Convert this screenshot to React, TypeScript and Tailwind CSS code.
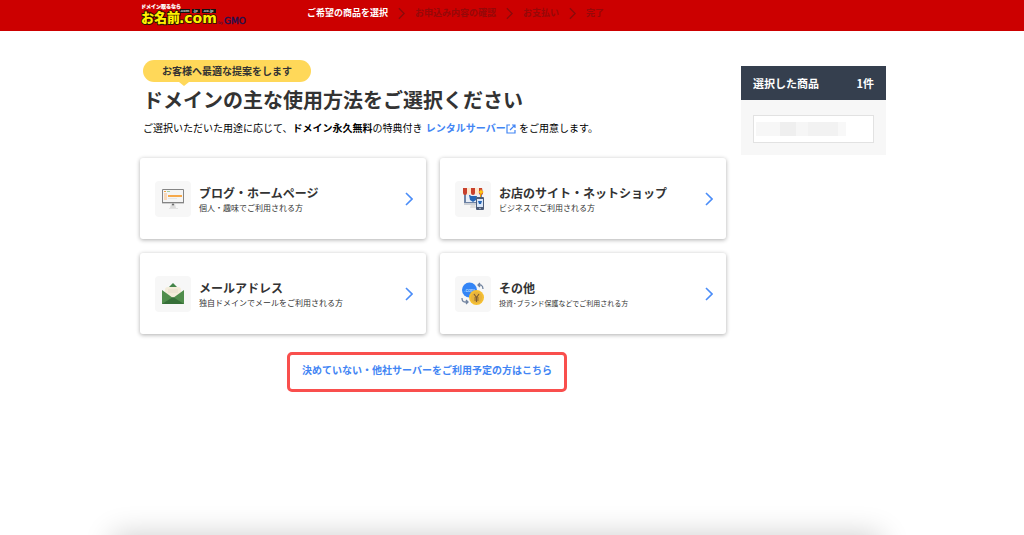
import { Fragment, type ReactNode } from "react";

const steps = ["ご希望の商品を選択", "お申込み内容の確認", "お支払い", "完了"];

function Chevron({ className }: { className: string }) {
  return (
    <svg viewBox="0 0 8 14" className={className} fill="none" stroke="currentColor" aria-hidden="true">
      <path d="M1 1l6 6-6 6" strokeWidth="1.6" />
    </svg>
  );
}

function Logo() {
  return (
    <svg viewBox="0 0 110 28" className="h-7 w-[110px]" role="img" aria-label="お名前.com by GMO">
      <g fontFamily="'Noto Sans CJK JP', sans-serif" fontWeight="900">
        <text x="0" y="8" fontSize="5" fill="#fff" stroke="#fff" strokeWidth="0.2">ドメイン取るなら</text>
        <text x="0" y="22" fontSize="13" fill="#fff100" stroke="#2a1500" strokeWidth="2" paintOrder="stroke">お名前</text>
      </g>
      <g fontFamily="'DejaVu Sans', sans-serif">
        <text x="38" y="23" fontSize="14" fontWeight="700" fill="#fff100" stroke="#2a1500" strokeWidth="1.6" paintOrder="stroke">.com</text>
        <text x="77" y="24" fontSize="4" fill="#24124f">by</text>
        <text x="83" y="24" fontSize="9" fill="#24124f" stroke="#24124f" strokeWidth="0.4">GMO</text>
      </g>
      <path d="M39 9h10v4H39zM51 9h8v4h-8zM61 9h14v4H61z" fill="#111" />
      <g fontFamily="'Liberation Sans', sans-serif" fontWeight="700" fontSize="4" fill="#ddd">
        <text x="39" y="12">.com</text>
        <text x="52" y="12">.jp</text>
        <text x="62" y="12">.co.jp</text>
      </g>
    </svg>
  );
}

const icon = "h-6 w-6";

function MonitorIcon() {
  return (
    <svg viewBox="0 0 24 24" className={icon} aria-hidden="true">
      <path d="M10 17h4l1 4H9z" fill="#dcdcdc" />
      <path d="M8 21h9v1H8z" fill="#e2e2e2" />
      <rect x="1" y="2" width="22" height="15" rx="1" fill="#858585" />
      <rect x="2" y="3" width="20" height="12" fill="#f5f5f5" />
      <path d="M3 4h2v1H3z" fill="#f4a340" />
      <path d="M6 4h3v1H6z" fill="#a9cf9a" />
      <path d="M3 6h3v7H3z" fill="#f8d9bb" />
      <path d="M7 8h14v2H7z" fill="#f6a94b" />
      <path d="M7 11h9v1H7z" fill="#e6e6e6" />
      <path d="M1 16h22v1H1z" fill="#cfcfcf" />
      <circle cx="12" cy="17.5" r="1" fill="#666" />
    </svg>
  );
}

function ShopIcon() {
  return (
    <svg viewBox="0 0 24 24" className={icon} aria-hidden="true">
      <path d="M10 17h4l1 4H9z" fill="#dedede" />
      <rect x="3" y="5" width="18" height="12" fill="#6e83a5" />
      <rect x="5" y="6" width="14" height="9" fill="#e8eef7" />
      <path d="M3 16h18v2H3z" fill="#ccd0d6" />
      <path d="M8 8h1l1 1h6l-1 4-3 2-3-2z" fill="#2465b5" />
      <path d="M2 1h4v5a2 2 0 0 1-4 0zM10 1h4v5a2 2 0 0 1-4 0zM18 1h3l1 5a2 2 0 0 1-4 0z" fill="#c8402c" />
      <path d="M6 1h4v5a2 2 0 0 1-4 0zM14 1h4v5a2 2 0 0 1-4 0z" fill="#ffe6cc" />
      <path d="M20 2l1 2 2 1-2 1-1 2-1-2-2-1 2-1z" fill="#ffc914" />
      <path d="M19 7h1v4h-1z" fill="#f2a000" />
      <rect x="15" y="10" width="8" height="13" rx="1" fill="#4c5c78" />
      <rect x="16" y="12" width="6" height="8" fill="#d9e6f8" />
      <path d="M17 14h4l-1 3h-2z" fill="#2465b5" />
      <circle cx="19" cy="21.5" r=".7" fill="#cdd5e2" />
    </svg>
  );
}

function MailIcon() {
  return (
    <svg viewBox="0 0 24 24" className={icon} aria-hidden="true">
      <path d="M12 1L7 6h10z" fill="#438449" />
      <path d="M4 8q0-3 3-3h10q3 0 3 3v10H4z" fill="#f3ecd9" />
      <path d="M7 8h10M7 10h10" stroke="#ddd5c1" strokeWidth=".6" />
      <path d="M1 8l11 8 11-8v14H1z" fill="#508d4c" />
      <path d="M1 22l11-7 11 7z" fill="#366f38" />
    </svg>
  );
}

function ExchangeIcon() {
  return (
    <svg viewBox="0 0 24 24" className={icon} aria-hidden="true">
      <circle cx="8.5" cy="8" r="7.5" fill="#3485f6" />
      <text x="8.5" y="9.5" textAnchor="middle" fontSize="5" fill="#d4e7ff" fontFamily="'Liberation Sans', sans-serif">.com</text>
      <circle cx="15.5" cy="15.5" r="7.5" fill="#f5bf32" />
      <circle cx="15.5" cy="15.5" r="5.5" fill="#e7b33c" />
      <path d="M13 12l2.5 3.5L18 12M15.5 15.5V20M13.3 16h4.4M13.3 18h4.4" fill="none" stroke="#805d32" strokeWidth="1.1" />
      <g fill="none" stroke="#71839f" strokeWidth="1.3">
        <path d="M17 3h3q2 1 2 4M19 1l-2 2 2 2" />
        <path d="M1 16q0 4 3 4h3M5 18l2 2-2 2" />
      </g>
    </svg>
  );
}

type UsageCardProps = { title: string; note: string; compact?: boolean; children: ReactNode };

function UsageCard({ title, note, compact = false, children }: UsageCardProps) {
  return (
    <button
      type="button"
      className="flex min-h-[81px] cursor-pointer items-center gap-2 rounded-[3px] bg-white pr-[13px] pl-[15px] text-left shadow-[0_1px_4px_rgba(0,0,0,0.32)]"
    >
      <span className="flex size-9 shrink-0 items-center justify-center rounded-sm bg-[#f7f7f7]">{children}</span>
      <span className="flex flex-1 flex-col">
        <span className="text-[12px] leading-[18px] font-bold">{title}</span>
        <span className={compact ? "text-[7px] leading-3" : "text-[8px] leading-3"}>{note}</span>
      </span>
      <Chevron className="h-[14px] w-2 text-[#4b8df8]" />
    </button>
  );
}

export default function App() {
  return (
    <div className="flex min-h-screen flex-col bg-white font-['Noto_Sans_CJK_JP',sans-serif] text-[#333]">
      <header className="bg-[#cc0000]">
        <div className="mx-auto flex min-h-[31px] w-full max-w-[748px] items-start gap-14 pl-[3px]">
          <a href="#" className="shrink-0">
            <Logo />
          </a>
          <ol className="flex items-center gap-[10px] pt-[5px] text-[9px] leading-4 font-bold whitespace-nowrap text-[#960808]">
            {steps.map((step, index) => (
              <Fragment key={step}>
                {index > 0 && (
                  <li aria-hidden="true">
                    <Chevron className="h-[13px] w-[7px] text-[#8a0a0a]" />
                  </li>
                )}
                <li aria-current={index === 0 ? "step" : undefined} className={index === 0 ? "text-white" : ""}>
                  {step}
                </li>
              </Fragment>
            ))}
          </ol>
        </div>
      </header>

      <div className="mx-auto flex w-full max-w-[748px] items-start gap-[15px] pl-[2px]">
        <main className="flex-1 pt-[29px]">
          <div className="px-[3px]">
            <p className="relative w-fit rounded-full bg-[#ffd859] px-[19px] py-[3px] text-[10px] leading-4 font-bold">
              お客様へ最適な提案をします
              <span className="absolute top-full left-9 border-x-[5px] border-t-4 border-x-transparent border-t-[#ffd859]" />
            </p>
            <h1 className="text-[20px] leading-9 font-bold">ドメインの主な使用方法をご選択ください</h1>
            <p className="text-[10px] leading-5 text-black">
              ご選択いただいた用途に応じて、<strong className="font-bold">ドメイン永久無料</strong>の特典付き{" "}
              <a href="#" className="mx-px font-bold text-[#4285f4]">
                レンタルサーバー
                <svg viewBox="0 0 10 10" className="inline size-[10px] align-[-2px]" fill="none" stroke="currentColor" aria-hidden="true">
                  <path d="M4 1H1v8h8V6M6 1h3v3M9 1L4 6" strokeWidth="1.2" />
                </svg>
              </a>{" "}
              をご用意します。
            </p>
          </div>

          <div className="grid grid-cols-2 gap-[14px] pt-5">
            <UsageCard title="ブログ・ホームページ" note="個人・趣味でご利用される方">
              <MonitorIcon />
            </UsageCard>
            <UsageCard title="お店のサイト・ネットショップ" note="ビジネスでご利用される方">
              <ShopIcon />
            </UsageCard>
            <UsageCard title="メールアドレス" note="独自ドメインでメールをご利用される方">
              <MailIcon />
            </UsageCard>
            <UsageCard title="その他" note="投資･ブランド保護などでご利用される方" compact>
              <ExchangeIcon />
            </UsageCard>
          </div>

          <div className="flex justify-center pt-[18px] pr-3">
            <a
              href="#"
              className="rounded-[5px] border-[3px] border-[#f94f4d] px-3 pt-2 pb-3 text-[10px] leading-[14px] font-bold text-[#4285f4]"
            >
              決めていない・他社サーバーをご利用予定の方はこちら
            </a>
          </div>
        </main>

        <aside className="mt-[35px] w-[145px] shrink-0 bg-[#f7f7f7]">
          <h2 className="flex justify-between bg-[#353f4e] px-3 py-[9px] text-[11px] leading-4 font-bold text-white">
            <span>選択した商品</span>
            <span>1件</span>
          </h2>
          <div className="px-3 pt-[15px] pb-3">
            <div className="border border-[#e2e2e2] bg-white px-[2px] py-[6px]">
              <div className="flex h-[14px] w-[90px]">
                <span className="w-6 bg-[#f7f7f7]" />
                <span className="w-4 bg-[#efefef]" />
                <span className="w-3 bg-[#f6f6f6]" />
                <span className="flex-1 bg-[#f2f2f2]" />
                <span className="w-2 bg-[#f8f8f8]" />
              </div>
            </div>
          </div>
        </aside>
      </div>

      <div className="pointer-events-none fixed top-full left-[11%] h-20 w-3/4 shadow-[0_0_30px_rgba(0,0,0,0.2)]" />
    </div>
  );
}
